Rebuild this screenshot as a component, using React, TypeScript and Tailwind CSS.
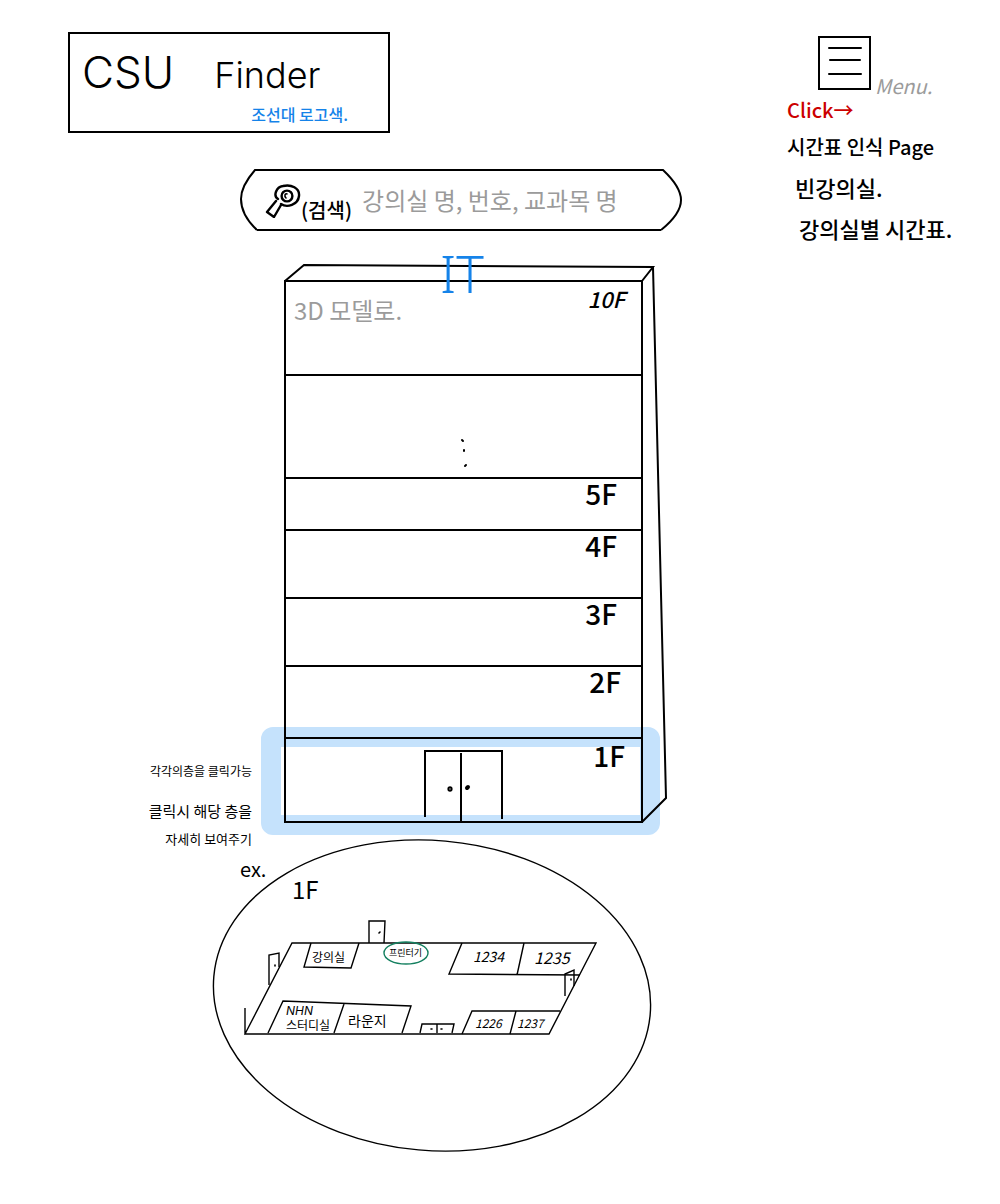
import React from "react";

type Floor = { label: string; style: string };

const floors: Floor[] = [
  { label: "5F", style: "h-[52px] pr-6" },
  { label: "4F", style: "h-[68px] pr-6" },
  { label: "3F", style: "h-[68px] pr-6" },
  { label: "2F", style: "h-[72px] pr-5" },
];

function Logo() {
  return (
    <div className="w-full max-w-[322px] border-2 border-black px-3 pt-3 pb-1">
      <h1 className="flex items-baseline gap-10 font-['Inter',sans-serif] leading-[52px] font-light">
        <span className="text-[44px]">CSU</span>
        <span className="text-[36px]">Finder</span>
      </h1>
      <p className="pr-7 text-right text-base leading-[26px] font-medium text-[#1583e9]">조선대 로고색.</p>
    </div>
  );
}

function SearchBar() {
  return (
    <form role="search" className="flex h-[62px] w-full max-w-[442px]" onSubmit={(e) => e.preventDefault()}>
      <svg className="h-full w-[17px] shrink-0" viewBox="0 0 17 62" fill="none" stroke="black" strokeWidth="2">
        <path d="M17 1H15Q1 17 1 30Q1 46 17 61" />
      </svg>
      <div className="flex min-w-0 flex-1 items-center border-y-2 border-black pl-2">
        <svg className="h-9 w-9 shrink-0" viewBox="0 0 36 36" fill="none" stroke="black" strokeWidth="2.4" strokeLinecap="round" strokeLinejoin="round">
          <path d="M13 17C8 14 11 5 18 4C26 2 35 6 34 14C33 23 22 26 16 22" />
          <circle cx="22" cy="14" r="5.4" />
          <path d="M21 16C19 14 20 11 22 12" strokeWidth="1.6" />
          <path d="M11 19L2 30L9 35L16 23" />
        </svg>
        <label htmlFor="room-search" className="shrink-0 pt-5 text-xl leading-7 font-medium">
          (검색)
        </label>
        <input
          id="room-search"
          type="search"
          placeholder="강의실 명, 번호, 교과목 명"
          className="ml-2.5 w-full min-w-0 bg-transparent text-2xl outline-none placeholder:text-[#9b9b9b]"
        />
      </div>
      <svg className="h-full w-[21px] shrink-0" viewBox="0 0 21 62" fill="none" stroke="black" strokeWidth="2">
        <path d="M0 1H2Q20 18 20 31Q20 45 0 61" />
      </svg>
    </form>
  );
}

function MenuPanel() {
  return (
    <aside className="w-[164px] shrink-0">
      <div className="flex items-end pl-[31px]">
        <button aria-label="Menu" className="h-[54px] w-[53px] border-2 border-black">
          <svg viewBox="0 0 49 50" className="h-full w-full" fill="none" stroke="black" strokeWidth="2" strokeLinecap="round">
            <path d="M9 10H41M10 22H40M9 36H41" />
          </svg>
        </button>
        <span className="-mb-3 pl-1 text-xl leading-8 text-[#9b9b9b] italic">Menu.</span>
      </div>
      <p className="pt-1 text-xl leading-8 font-medium text-[#cc0000]">Click→</p>
      <nav className="font-medium">
        <a href="#timetable" className="block text-xl leading-[41px] whitespace-nowrap">시간표 인식 Page</a>
        <a href="#empty" className="block pl-2 text-[22px] leading-[41px] whitespace-nowrap">빈강의실.</a>
        <a href="#rooms" className="block pl-3 text-[22px] leading-[41px] whitespace-nowrap">강의실별 시간표.</a>
      </nav>
    </aside>
  );
}

function Building() {
  return (
    <div className="relative w-full max-w-[383px] pt-[17px] pr-6">
      <svg className="pointer-events-none absolute inset-0 z-10 h-full w-full" viewBox="0 0 383 560" preserveAspectRatio="none" fill="none" stroke="black" strokeWidth="2">
        <path d="M1 18L20 2L369 4L358 18M369 4L382 535L358 559" />
      </svg>
      <span className="absolute -top-4 left-[156px] z-20 font-['Noto_Sans',sans-serif] text-[52px] leading-[52px] font-light text-[#1583e9]">IT</span>
      <div className="border-x-2 border-b-2 border-black">
        <button className="flex h-[94px] w-full items-start justify-between border-t-2 border-black pr-4 pl-2">
          <span className="pt-2 text-2xl leading-10 text-[#9b9b9b]">3D 모델로.</span>
          <span className="text-[22px] leading-8 font-medium italic">10F</span>
        </button>
        <div className="flex h-[103px] items-end justify-center border-t-2 border-black pb-2">
          <svg className="h-8 w-2" viewBox="0 0 8 32" stroke="black" strokeWidth="2" strokeLinecap="round">
            <path d="M2 3L3 4M4 13L4 14M5 29L6 28" />
          </svg>
        </div>
        {floors.map((f) => (
          <button key={f.label} className={`${f.style} flex w-full items-start justify-end border-t-2 border-black text-[28px] leading-7 font-medium`}>
            {f.label}
          </button>
        ))}
        <button className="relative flex h-[84px] w-full items-end justify-center">
          <span className="absolute -top-2.5 -right-[19px] -bottom-[14px] -left-[25px] -z-10 rounded-xl border-20 border-[#c5e2fc]" />
          <span className="absolute inset-x-0 top-0 border-t-2 border-black" />
          <svg className="h-[71px] w-[79px]" viewBox="0 0 79 71" fill="none" stroke="black" strokeWidth="2">
            <path d="M1 67V1H78V69M37 3V71" />
            <ellipse cx="26" cy="39" rx="1.6" ry="1.8" />
            <path d="M43 38L44 37" strokeWidth="4" strokeLinecap="round" />
          </svg>
          <span className="absolute top-1 right-4 text-[28px] leading-7 font-medium">1F</span>
        </button>
      </div>
    </div>
  );
}

function FloorPlan() {
  return (
    <svg role="img" aria-label="1F" className="w-full max-w-[440px]" viewBox="212 839 440 313" fill="none" stroke="black" strokeWidth="1.4">
      <ellipse cx="432" cy="995.5" rx="219" ry="155" transform="rotate(5 432 995.5)" />
      <path d="M292 943H596L549 1034H245ZM245 1008V1034" />
      <path d="M311 943L304 967L351 968L359 943" />
      <path d="M462 943L449 974L580 975M524 943L517 975" />
      <path d="M268 1033L283 1001L411 1006L402 1033M344 1004L334 1033" />
      <path d="M462 1034L472 1011H560M516 1011L510 1034" />
      <path d="M369 943V921H385L384 943M269 985V955L279 953V967M565 996V974L574 970V986" />
      <path d="M420 1033L422 1024H454L452 1033M437 1024V1033" />
      <path d="M379 933L380 932M275 965V966M571 979V980M431 1029H432M441 1029H442" strokeWidth="1.6" strokeLinecap="round" />
      <ellipse cx="406" cy="953" rx="22" ry="11" stroke="#158060" />
      <g fill="black" stroke="none">
        <text x="240" y="877" className="text-xl">ex.</text>
        <text x="292" y="899" className="text-2xl">1F</text>
        <text x="312" y="962" className="text-xs">강의실</text>
        <text x="389" y="956" className="text-[9px]">프린터기</text>
        <text x="473" y="962" className="text-sm italic">1234</text>
        <text x="534" y="964" className="text-base italic">1235</text>
        <text x="286" y="1015" className="font-['Inter',sans-serif] text-xs italic">NHN</text>
        <text x="286" y="1030" className="text-xs">스터디실</text>
        <text x="348" y="1026" className="text-sm">라운지</text>
        <text x="475" y="1028" className="text-xs italic">1226</text>
        <text x="517" y="1028" className="text-xs italic">1237</text>
      </g>
    </svg>
  );
}

export default function App() {
  return (
    <div className="relative isolate flex min-h-screen items-start justify-between bg-white pr-[49px] pb-12 pl-[68px] font-['Noto_Sans_CJK_KR',sans-serif] text-black">
      <main className="min-w-0 flex-1 pt-8">
        <Logo />
        <div className="mt-9 pl-[172px]">
          <SearchBar />
        </div>
        <section className="mt-8 grid grid-cols-[184px_minmax(0,1fr)] gap-8">
          <div className="-mb-7 self-end text-right whitespace-nowrap">
            <p className="text-xs leading-8">각각의층을 클릭가능</p>
            <p className="pt-2 text-[15px] leading-8">클릭시 해당 층을</p>
            <p className="text-[13px] leading-6">자세히 보여주기</p>
          </div>
          <Building />
        </section>
        <section className="mt-4 pl-36">
          <FloorPlan />
        </section>
      </main>
      <div className="pt-9">
        <MenuPanel />
      </div>
    </div>
  );
}
